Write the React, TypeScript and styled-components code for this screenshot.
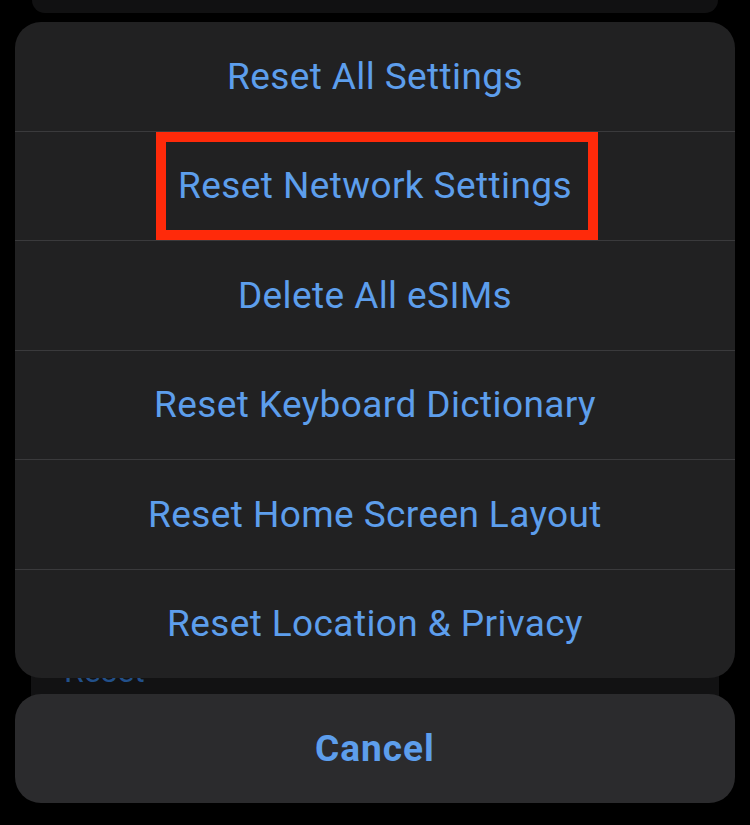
import React from "react";
import styled, { createGlobalStyle } from "styled-components";

const GlobalStyle = createGlobalStyle`
  html, body {
    margin: 0;
    padding: 0;
    background: #000;
  }
  body {
    font-family: Roboto, "Noto Sans", "Liberation Sans", sans-serif;
    -webkit-font-smoothing: antialiased;
  }
`;

const Screen = styled.div`
  position: relative;
  width: 750px;
  height: 825px;
  overflow: hidden;
  background: #000;
`;

/* Dimmed settings page underneath the action sheet */
const Backdrop = styled.div`
  display: flex;
  flex-direction: column;
  gap: 17px;
`;

const BackCardTop = styled.div`
  margin: 0 32px;
  height: 13px;
  background: #111112;
  border-radius: 0 0 22px 22px;
`;

const BackCard = styled.div`
  margin: 0 31px;
  height: 690px;
  background: #121213;
  border-radius: 22px;
  display: flex;
  flex-direction: column;
  justify-content: flex-end;
  align-items: flex-start;
  padding: 0 0 33px 33px;
  box-sizing: border-box;
`;

const BackLabel = styled.span`
  font-size: 32px;
  color: #22508a;
  line-height: 1;
`;

/* Action sheet overlay */
const Overlay = styled.div`
  position: absolute;
  inset: 0;
  padding: 22px 15px 0;
  display: flex;
  flex-direction: column;
  gap: 16px;
`;

const Sheet = styled.div`
  background: #212122;
  border-radius: 26px;
  overflow: hidden;
  display: flex;
  flex-direction: column;
`;

const Row = styled.div<{ $first?: boolean }>`
  height: 108.5px;
  display: flex;
  align-items: center;
  justify-content: center;
  border-top: ${(p) => (p.$first ? "none" : "1px solid #3a3a3c")};
  box-sizing: content-box;
`;

const Label = styled.span<{ $bold?: boolean }>`
  font-size: 37px;
  font-weight: ${(p) => (p.$bold ? 700 : 400)};
  color: #5d9eec;
  line-height: 1;
  letter-spacing: ${(p) => (p.$bold ? "1px" : "0.4px")};
`;

const Highlight = styled.span`
  display: inline-flex;
  align-items: center;
  height: 108px;
  box-sizing: border-box;
  border: 10px solid #ff2a0a;
  padding: 0 16px 0 12px;
  margin-left: 4px;
`;

const CancelButton = styled.div`
  height: 109px;
  background: #2b2b2d;
  border-radius: 26px;
  display: flex;
  align-items: center;
  justify-content: center;
`;

const items = [
  "Reset All Settings",
  "Reset Network Settings",
  "Delete All eSIMs",
  "Reset Keyboard Dictionary",
  "Reset Home Screen Layout",
  "Reset Location & Privacy",
];

export default function App() {
  return (
    <>
      <GlobalStyle />
      <Screen>
        <Backdrop>
          <BackCardTop />
          <BackCard>
            <BackLabel>Reset</BackLabel>
          </BackCard>
        </Backdrop>
        <Overlay>
          <Sheet>
            {items.map((t, i) => (
              <Row key={t} $first={i === 0}>
                {i === 1 ? (
                  <Highlight>
                    <Label>{t}</Label>
                  </Highlight>
                ) : (
                  <Label>{t}</Label>
                )}
              </Row>
            ))}
          </Sheet>
          <CancelButton>
            <Label $bold>Cancel</Label>
          </CancelButton>
        </Overlay>
      </Screen>
    </>
  );
}
